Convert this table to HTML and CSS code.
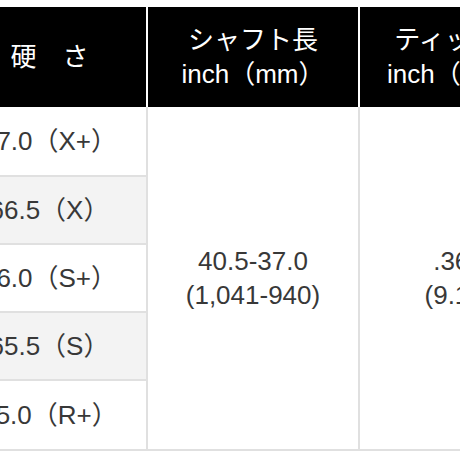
FILE: index.html
```html
<!DOCTYPE html>
<html lang="ja">
<head>
<meta charset="utf-8">
<link rel="stylesheet" href="styles.css">
</head>
<body>
<div class="frame">
  <table class="spec">
    <colgroup>
      <col class="c1"><col class="c2"><col class="c3">
    </colgroup>
    <thead>
      <tr>
        <th>硬　さ</th>
        <th>シャフト長<br>inch（mm）</th>
        <th>ティップ径<br>inch（mm）</th>
      </tr>
    </thead>
    <tbody>
      <tr class="edge">
        <td class="flex">67.0（X+）</td>
        <td class="merged" rowspan="5">40.5-37.0<br>(1,041-940)</td>
        <td class="merged" rowspan="5">.360<br>(9.14)</td>
      </tr>
      <tr class="alt"><td class="flex">66.5（X）</td></tr>
      <tr><td class="flex">66.0（S+）</td></tr>
      <tr class="alt"><td class="flex">65.5（S）</td></tr>
      <tr class="edge"><td class="flex">65.0（R+）</td></tr>
    </tbody>
  </table>
</div>
</body>
</html>
```

FILE: styles.css
```css
html, body {
  margin: 0;
  padding: 0;
  background: #ffffff;
}

.frame {
  width: 460px;
  height: 460px;
  overflow: hidden;
  padding-top: 7px;
  box-sizing: border-box;
}

.spec {
  margin-left: -47px;
  border-collapse: separate;
  border-spacing: 0;
  table-layout: fixed;
  width: 606px;
  font-family: "Liberation Sans", Arial, "Noto Sans CJK JP", sans-serif;
  font-size: 26px;
  line-height: 34px;
  color: #383838;
}

.c1 { width: 195px; }
.c2 { width: 212px; }
.c3 { width: 199px; }

.spec th {
  background: #000000;
  color: #ffffff;
  font-weight: normal;
  padding: 16px 0;
  text-align: center;
  border-right: 2px solid #ffffff;
}

.spec td {
  text-align: center;
  vertical-align: middle;
  padding: 0;
  border-bottom: 2px solid #e0e0e0;
  border-right: 2px solid #e0e0e0;
  background: #ffffff;
}

.spec td.flex {
  height: 66px;
}

.spec tr.edge td.flex {
  height: 68px;
}

.spec tr.alt td.flex {
  background: #f3f3f3;
}
```
